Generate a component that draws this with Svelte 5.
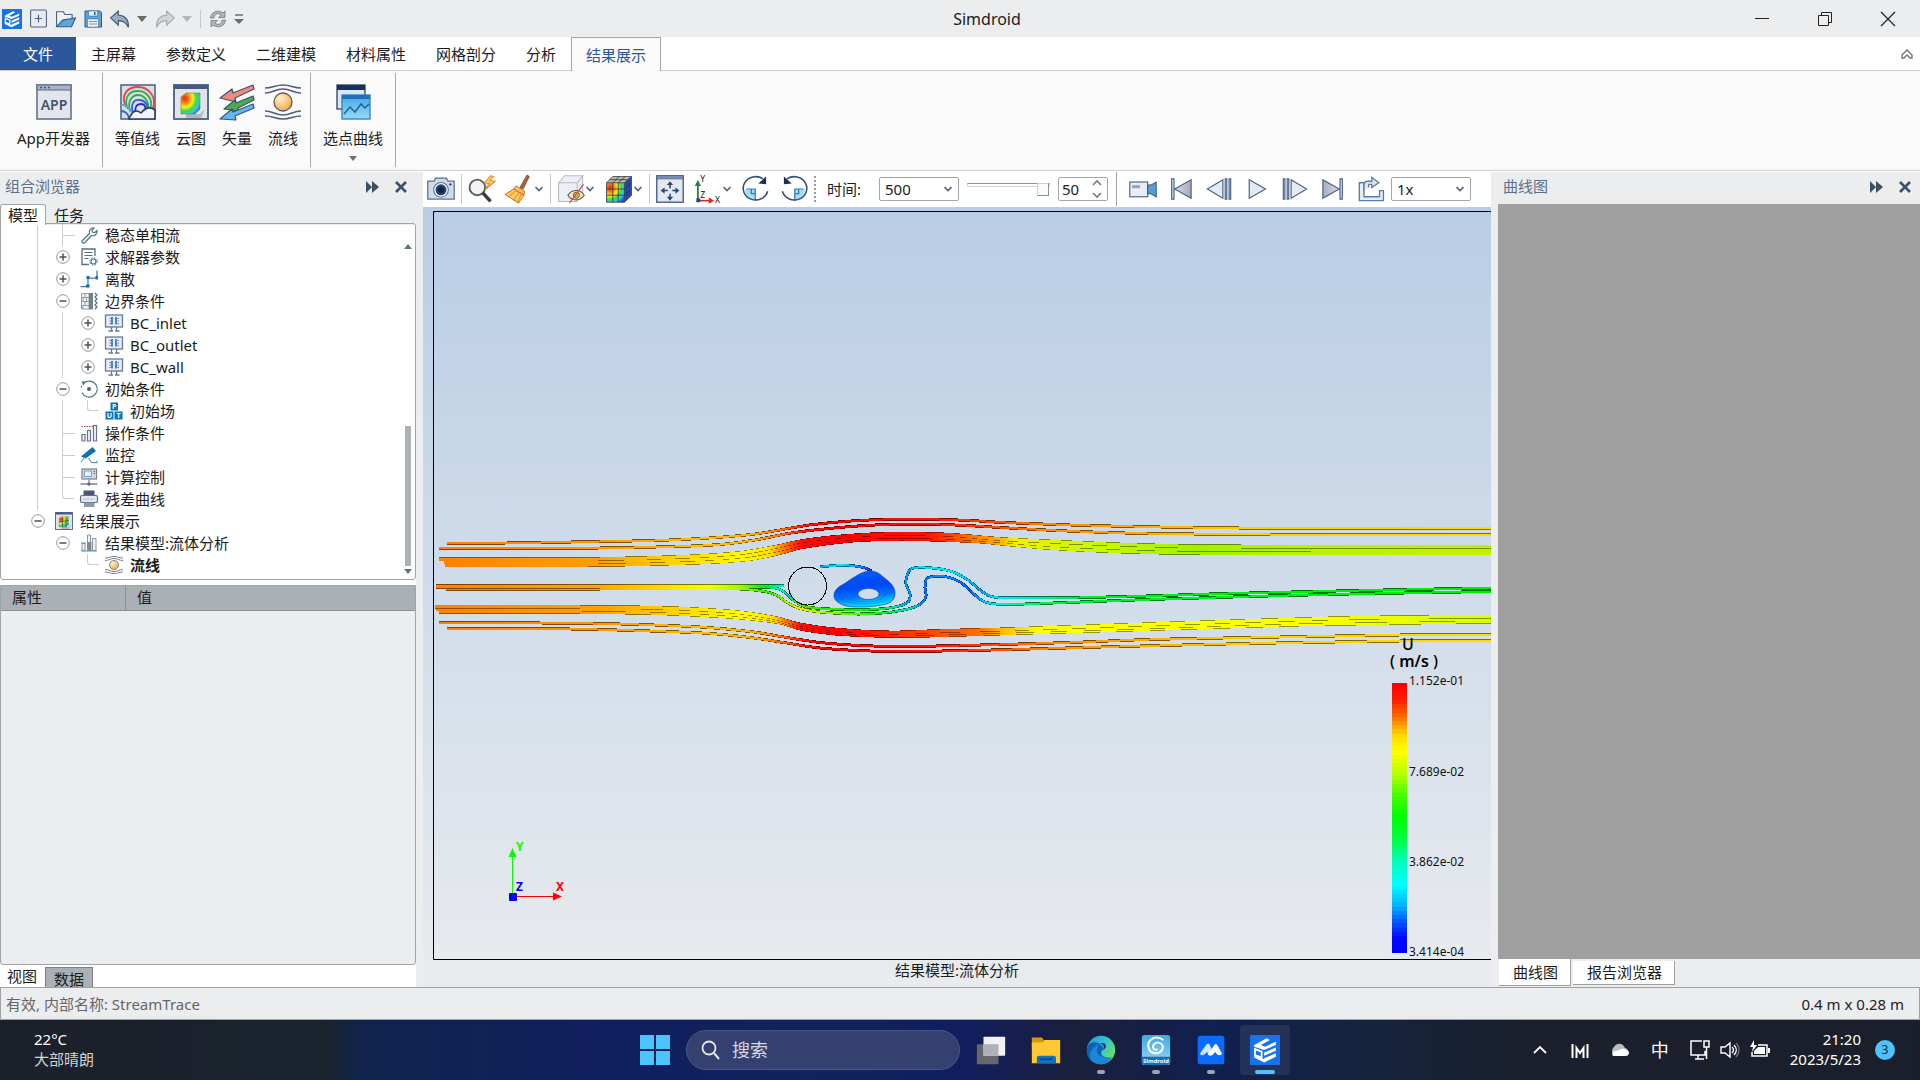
<script>
  const ribbonTabs = ['主屏幕', '参数定义', '二维建模', '材料属性', '网格剖分', '分析', '结果展示'];
  let activeTab = $state('结果展示');

  const ribbonGroups = [
    [{ label: 'App开发器', icon: 'app' }],
    [
      { label: '等值线', icon: 'contour' },
      { label: '云图', icon: 'cloudmap' },
      { label: '矢量', icon: 'vector' },
      { label: '流线', icon: 'stream' }
    ],
    [{ label: '选点曲线', icon: 'curve', menu: true }]
  ];

  // cells: v = guide line, t = branch, l = last branch, + / - = expander, space = blank
  const tree = [
    { cells: ' vt', icon: 'wrench', label: '稳态单相流' },
    { cells: ' v+', icon: 'params', label: '求解器参数' },
    { cells: ' v+', icon: 'discrete', label: '离散' },
    { cells: ' v-', icon: 'wall', label: '边界条件' },
    { cells: ' vv+', icon: 'bc', label: 'BC_inlet' },
    { cells: ' vv+', icon: 'bc', label: 'BC_outlet' },
    { cells: ' vv+', icon: 'bc', label: 'BC_wall' },
    { cells: ' v-', icon: 'initial', label: '初始条件' },
    { cells: ' vvl', icon: 'field', label: '初始场' },
    { cells: ' vt', icon: 'operate', label: '操作条件' },
    { cells: ' vt', icon: 'monitor', label: '监控' },
    { cells: ' vt', icon: 'control', label: '计算控制' },
    { cells: ' vl', icon: 'residual', label: '残差曲线' },
    { cells: ' -', icon: 'result', label: '结果展示' },
    { cells: '  -', icon: 'model', label: '结果模型:流体分析' },
    { cells: '   l', icon: 'stream', label: '流线', bold: true }
  ];

  const viewTools = [
    { icon: 'camera', label: '截图', sep: 'line' },
    { icon: 'zoom', label: '缩放' },
    { icon: 'broom', label: '清除', menu: true, sep: 'line' },
    { icon: 'hidebox', label: '隐藏', menu: true },
    { icon: 'cube', label: '显示模式', menu: true, sep: 'line' },
    { icon: 'fit', label: '适应窗口' },
    { icon: 'axes', label: '视角', menu: true },
    { icon: 'rotcw', label: '顺时针旋转' },
    { icon: 'rotccw', label: '逆时针旋转', sep: 'dots' }
  ];

  const playerTools = [
    { icon: 'video', label: '录制' },
    { icon: 'first', label: '第一帧' },
    { icon: 'prev', label: '上一帧' },
    { icon: 'play', label: '播放' },
    { icon: 'next', label: '下一帧' },
    { icon: 'last', label: '最后一帧' }
  ];

  const taskApps = [
    { icon: 'taskview', label: '任务视图' },
    { icon: 'folder', label: '文件资源管理器' },
    { icon: 'edge', label: 'Edge', running: true },
    { icon: 'simdroid', label: 'Simdroid', running: true },
    { icon: 'meeting', label: '会议', running: true },
    { icon: 'logo', label: 'Simdroid', current: true }
  ];

  let frame = $state(50);

  // stream tubes, in view coordinates
  const tubes = [
    { color: 'outer', pts: [[447,543],[507,543],[600,541.5],[655,540.5],[709,538],[755,534],[794,527.5],[813,524.5],[851,521],[889,519.3],[927,519.3],[966,520.3],[1000,522.3],[1070,525],[1160,527],[1270,528.3],[1491,528.5]] },
    { color: 'outer', pts: [[439,548.5],[600,548],[675,546.5],[720,544.5],[755,540],[794,532.5],[851,526.5],[889,524.5],[927,524.2],[966,525.5],[1000,527.5],[1067,531],[1147,533.5],[1270,534.5],[1491,534.5]] },
    { color: 'upper', thick: true, pts: [[445,565],[590,565],[700,562.5],[750,559],[780,553],[800,547.5],[830,543],[860,540],[900,539],[940,539.8],[980,541.5],[1000,543.5],[1050,548],[1120,551.5],[1200,553],[1491,553]] },
    { color: 'upper', thick: true, pts: [[444,562.3],[600,562],[695,559.5],[745,556],[778,550],[800,544.5],[830,540.5],[865,537.5],[900,536.5],[945,537.5],[1000,541],[1050,545],[1120,548],[1200,549.8],[1491,550]] },
    { color: 'upper', thick: true, pts: [[439,559.5],[600,559],[690,556.5],[740,553],[775,547],[800,541.5],[830,537.5],[870,534.5],[905,533.8],[950,534.8],[1000,539],[1050,541.5],[1120,544.5],[1200,546.3],[1491,546.8]] },
    { color: 'lower', thick: true, pts: [[439,611.5],[580,612],[650,613],[700,615],[745,618],[780,622.5],[800,628.5],[830,633],[860,635],[900,636],[950,635],[1000,633.5],[1150,629],[1300,624.5],[1491,621.5]] },
    { color: 'lower', thick: true, pts: [[436,609],[580,609.5],[650,610.5],[700,612.5],[743,615.5],[778,620.5],[800,626.5],[830,631],[865,633.5],[900,634.3],[950,633],[1000,631.5],[1150,627],[1300,622],[1491,619]] },
    { color: 'lower', thick: true, pts: [[435,606.5],[580,607],[640,607.5],[690,609],[740,612.5],[775,618],[800,624.5],[830,629],[870,632],[900,632.5],[940,631],[1000,629.5],[1200,622.5],[1350,618],[1491,616.5]] },
    { color: 'outer', pts: [[439,622.5],[540,623],[620,624],[700,627],[750,631.5],[790,638],[820,642.5],[860,645.5],[900,646.5],[960,645.5],[1000,644.5],[1070,642.5],[1150,639.5],[1280,637],[1400,635],[1491,634.5]] },
    { color: 'outer', pts: [[447,628.5],[570,629],[650,631],[710,633.5],[750,637.5],[790,643.5],[820,648],[870,651],[920,651.3],[1000,649.8],[1120,646.5],[1250,643.5],[1400,641],[1491,640.5]] },
    { color: 'wakeOut', pts: [[446,589],[600,589],[740,589],[765,591.5],[777,595.5],[788,603],[800,608.5],[820,612],[855,614],[885,612.8],[910,608.5],[922,603],[926,596],[925,588],[926,580],[930,577],[945,576.5],[960,582],[975,595],[985,602],[1000,604.3],[1025,604],[1080,602],[1150,599.5],[1250,596.5],[1350,594],[1491,591.5]] },
    { color: 'wakeIn', pts: [[436,587],[600,587],[750,587],[775,588],[783,591],[793,600],[805,606.5],[830,609],[870,609.5],[895,607],[908,602],[910,594],[906,584],[907,576],[911,569],[925,567.5],[950,571],[968,580],[980,590],[990,596],[1000,597.7],[1080,597.5],[1154,595.8],[1209,594],[1300,591.8],[1407,589.5],[1491,588]] },
    { color: 'wakeIn', pts: [[436,585.5],[600,585.5],[740,585.5],[784,585.5]] },
    { color: 'spiral', pts: [[820,566.7],[841,565.3],[855,566],[865,568],[872,571]] }
  ];

  const colors = {
    outer: [[435,'#ff8000'],[600,'#ff9800'],[700,'#ffc000'],[750,'#ffb400'],[780,'#ff7000'],[805,'#ff1000'],[830,'#ff0000'],[930,'#ff1000'],[1000,'#ff5000'],[1050,'#ff8c00'],[1130,'#ffa800'],[1250,'#ffd000'],[1491,'#ffdc00']],
    upper: [[435,'#ff8000'],[600,'#ffa000'],[680,'#ffd800'],[740,'#fff800'],[770,'#ffe000'],[785,'#ff7000'],[800,'#ff1000'],[830,'#ff0000'],[930,'#ff1400'],[970,'#ff7000'],[1000,'#ffb000'],[1015,'#f0f000'],[1100,'#c8f800'],[1200,'#a0f000'],[1300,'#b8f400'],[1491,'#c4f000']],
    lower: [[435,'#ff8000'],[600,'#ffa000'],[680,'#ffd800'],[740,'#ffff00'],[772,'#ffe000'],[785,'#ff8000'],[800,'#ff1000'],[830,'#ff0000'],[900,'#ff3000'],[980,'#ff7000'],[1005,'#ffc000'],[1040,'#ffff00'],[1300,'#fbff00'],[1491,'#d8ff00']],
    wakeIn: [[435,'#ff8000'],[600,'#ffa800'],[670,'#ffe000'],[710,'#f0ff00'],[740,'#a0f800'],[765,'#00e820'],[782,'#00f0d0'],[790,'#00d8a0'],[800,'#50e800'],[830,'#20f000'],[875,'#00f020'],[895,'#00e0b0'],[908,'#0090ff'],[920,'#00e0ff'],[950,'#00f0f0'],[980,'#00a0ff'],[1000,'#00e8ff'],[1040,'#00e8a0'],[1100,'#00f020'],[1491,'#00f000']],
    wakeOut: [[435,'#ff8000'],[600,'#ffa800'],[670,'#ffe000'],[710,'#f0ff00'],[740,'#a0f800'],[770,'#20f000'],[785,'#a0f000'],[800,'#f0f000'],[830,'#90f800'],[885,'#00f020'],[910,'#00e0c0'],[924,'#0070ff'],[940,'#0090ff'],[970,'#0060ff'],[985,'#00d0ff'],[1000,'#00f0d0'],[1050,'#00f040'],[1491,'#00f000']],
    spiral: [[820,'#00a0ff'],[840,'#00f0ff'],[855,'#00a0ff'],[872,'#0030ff']]
  };

  function smooth(pts) {
    let d = `M${pts[0][0]} ${pts[0][1]}`;
    for (let i = 0; i < pts.length - 1; i++) {
      const a = pts[i - 1] ?? pts[i];
      const b = pts[i];
      const c = pts[i + 1];
      const e = pts[i + 2] ?? c;
      // handle length follows the span, so long flat parts do not overshoot short ones
      const span = Math.hypot(c[0] - b[0], c[1] - b[1]) / 3;
      const lb = Math.hypot(c[0] - a[0], c[1] - a[1]) || 1;
      const lc = Math.hypot(e[0] - b[0], e[1] - b[1]) || 1;
      const x1 = b[0] + ((c[0] - a[0]) / lb) * span;
      const y1 = b[1] + ((c[1] - a[1]) / lb) * span;
      const x2 = c[0] - ((e[0] - b[0]) / lc) * span;
      const y2 = c[1] - ((e[1] - b[1]) / lc) * span;
      d += `C${x1} ${y1} ${x2} ${y2} ${c[0]} ${c[1]}`;
    }
    return d;
  }

  const legendStops = [
    [0, 255, 0, 0], [0.06, 255, 30, 0], [0.12, 255, 110, 0], [0.19, 255, 220, 0], [0.25, 255, 255, 0],
    [0.34, 180, 255, 0], [0.42, 60, 255, 0], [0.5, 0, 255, 0], [0.6, 0, 255, 90], [0.66, 0, 255, 180],
    [0.75, 0, 255, 255], [0.82, 0, 190, 255], [0.88, 0, 100, 255], [0.95, 0, 10, 255], [1, 0, 0, 255]
  ];
  const bands = Array.from({ length: 64 }, (_, i) => {
    const t = i / 63;
    const k = Math.max(1, legendStops.findIndex((s) => s[0] >= t));
    const a = legendStops[k - 1];
    const b = legendStops[k];
    const f = (t - a[0]) / (b[0] - a[0]);
    const ch = (n) => Math.round(a[n] + (b[n] - a[n]) * f);
    return `rgb(${ch(1)},${ch(2)},${ch(3)})`;
  });
  const legendLabels = [['1.152e-01', 685], ['7.689e-02', 776], ['3.862e-02', 866], ['3.414e-04', 956]];
</script>

{#snippet chevron()}
  <svg class="chev" viewBox="0 0 10 8"><path d="M1.5 2L5 5.600 8.500 2" fill="none" stroke="#4f6478" stroke-width="1.6" /></svg>
{/snippet}

{#snippet icon(name, size)}
  <svg width={size} height={size} viewBox="0 0 36 36" aria-hidden="true">
    {#if name === 'app'}
      <rect x="1" y="1" width="34" height="34" fill="#e3e5ea" stroke="#5a6a88" stroke-width="1.5" />
      <rect x="1" y="1" width="34" height="5" fill="#a9b3c4" stroke="#5a6a88" />
      <path d="M4 3.500h2M8 3.500h2M12 3.500h2" stroke="#4a5878" stroke-width="1.5" />
      <text x="18" y="26" text-anchor="middle" font-size="14" font-weight="600" fill="#44546f">APP</text>
    {:else if name === 'contour'}
      <rect x="1" y="1" width="34" height="34" fill="#d9dde6" stroke="#4a5c80" stroke-width="1.5" />
      <g fill="none" stroke-width="1.8">
        <path d="M6 23C0 10 8 3 18 3s19 9 15 21" stroke="#e04848" />
        <path d="M8 25C3 14 9 7 18 7s16 9 12 18" stroke="#2fae4e" />
        <path d="M10 27C7 17 12 11 18 11s12 7 10 15" stroke="#2fae4e" />
        <path d="M13 29C10 20 14 15 20 16s9 6 6 11" stroke="#3a5be0" />
        <path d="M16 30c-2-7 1-10 5-10s6 4 3 8" stroke="#2036c0" />
        <path d="M1 21c5-1 9 3 10 7" stroke="#4aa3df" />
        <path d="M1 27c4 0 8 3 8 8" stroke="#2b65c8" />
      </g>
      <path d="M9 35c3-8 7-10 12-6 5-6 10-6 14-3v9z" fill="#f3f4f7" stroke="#2c3c62" stroke-width="1.6" />
    {:else if name === 'cloudmap' || name === 'result'}
      <rect x="1" y="1" width="34" height="34" fill="#dfe3ea" stroke="#5a6c90" stroke-width="2" />
      <rect x="1" y="1" width="34" height="4" fill="#46597f" />
      <path d="M13 30h14l5-5-4 9H13z" fill="#8d97a8" opacity=".6" />
      <path d="M8 13l5-4h14v16l-5 5H8z" fill="url(#g-rainbow)" stroke="#6e8a2c" stroke-width=".6" />
      {#if name === 'result'}<path d="M8 20l19-3M15 12v18M22 11v19" stroke="#22402a" stroke-width="1.3" />{/if}
    {:else if name === 'vector'}
      <g stroke="#3f5374" stroke-width="1.2" stroke-linejoin="round">
        <path d="M1 14L13 5l1 4 20-8 1 4-19 9 1 4z" fill="#ef8a7c" />
        <path d="M5 25l11-9 1 3 17-7 1 4-16 8 1 3z" fill="#43ae52" />
        <path d="M1 35l12-10 1 3 20-8 1 4-19 8 1 4z" fill="#64b5f3" />
      </g>
    {:else if name === 'stream'}
      <g fill="none" stroke="#50607f" stroke-width="1.6">
        <path d="M0 4c8 0 10-3 18-3s10 3 18 3M0 9c8 0 10-4 18-4s10 4 18 4" />
        <path d="M0 32c8 0 10 3 18 3s10-3 18-3M0 27c8 0 10 4 18 4s10-4 18-4" />
      </g>
      <circle cx="18" cy="18" r="9" fill="url(#g-ball)" stroke="#5c5a60" stroke-width="1.3" />
    {:else if name === 'curve'}
      <rect x="2" y="1" width="28" height="24" fill="#dbe7f2" stroke="#2b3f66" stroke-width="1.3" />
      <rect x="2" y="1" width="28" height="5" fill="#16305e" />
      <rect x="7" y="11" width="28" height="24" fill="url(#g-sky)" stroke="#2b7fc0" stroke-width="1.3" />
      <rect x="7" y="11" width="28" height="4" fill="#2170b8" />
      <path d="M9 30l6-7 5 5 6-8 4 4 4-4" fill="none" stroke="#2a6090" stroke-width="1.5" />
    {:else if name === 'wrench'}
      <path d="M4 30L19 15c-2-6 3-12 9-11l-4 5 2 4 4 0 4-4c1 7-5 12-11 10L9 34c-3 1-6-1-5-4z" fill="#f2f6f7" stroke="#4d7480" stroke-width="2.4" />
    {:else if name === 'params'}
      <path d="M30 16V2H4v31h14" fill="#fff" stroke="#56707e" stroke-width="2.6" />
      <path d="M9 9h16M9 15h16M9 21h8" stroke="#56707e" stroke-width="2.4" />
      <circle cx="27" cy="27" r="5" fill="#fff" stroke="#2b7cc0" stroke-width="2.4" />
      <circle cx="27" cy="27" r="7.5" fill="none" stroke="#2b7cc0" stroke-width="2" stroke-dasharray="3 2.9" />
    {:else if name === 'discrete'}
      <path d="M1 33h15V16h18V1" fill="none" stroke="#50788c" stroke-width="2.5" />
      <path d="M12 29h7v6h-7zM13 12h6v6h-6zM31 12h5v7h-5z" fill="#0a72bd" />
    {:else if name === 'wall'}
      <path d="M3 3h15v31H3zM3 11h15M3 19h15M3 27h15M10 3v8M6 11v8M13 11v8M10 19v8M6 27v7" fill="#f2f4f5" stroke="#87949c" stroke-width="1.8" />
      <rect x="18" y="2" width="8" height="33" fill="#72828d" />
      <path d="M30 2l4 4-4 4 4 4-4 4 4 4-4 4 4 4-4 4" fill="none" stroke="#56707e" stroke-width="2.4" />
    {:else if name === 'bc'}
      <rect x="1" y="2" width="34" height="24" fill="#e6ebf4" stroke="#6a7898" stroke-width="2.6" />
      <path d="M14 6v15M22 6v15" stroke="#4a86c4" stroke-width="4" />
      <path d="M9 9h3M9 14h3M9 19h3M25 9h3M25 14h3M25 19h3" stroke="#4a86c4" stroke-width="2.4" />
      <path d="M13 26v7M23 26v7M7 34h9M20 34h9" stroke="#6a7898" stroke-width="2.6" />
    {:else if name === 'initial'}
      <path d="M8 6a16 16 0 1 1-4 19" fill="none" stroke="#4d7480" stroke-width="2.3" />
      <path d="M8 6a16 16 0 0 0-6 11" fill="none" stroke="#4d7480" stroke-width="2.3" stroke-dasharray="4 3" />
      <path d="M3 3h8l-4 8z" fill="#4d7480" />
      <circle cx="18" cy="18" r="4" fill="#50606a" />
    {:else if name === 'field'}
      <path d="M11 1h15v16H11zM1 19h16v16H1zM19 19h16v16H19z" fill="#0b73bd" />
      <g font-size="14" font-weight="700" fill="#fff" text-anchor="middle">
        <text x="18.5" y="14">P</text><text x="9" y="32">U</text><text x="27" y="32">T</text>
      </g>
    {:else if name === 'operate'}
      <path d="M3 5h24" stroke="#b04a4a" stroke-width="2" stroke-dasharray="3 2" />
      <path d="M4 21h6v13H4zM15 13h6v21h-6zM27 3h6v31h-6z" fill="#f4f5f8" stroke="#66728c" stroke-width="2.4" />
    {:else if name === 'monitor'}
      <path d="M2 21L25 2l7 8L11 25z" fill="#0b6fb8" />
      <path d="M2 32l8-10M17 24l6 9h11M34 29v6" fill="none" stroke="#5f93b8" stroke-width="2.2" />
    {:else if name === 'control'}
      <rect x="4" y="2" width="29" height="20" fill="#d5d9e1" stroke="#76829a" stroke-width="2.4" />
      <rect x="9" y="6" width="14" height="11" fill="#eaf4fc" stroke="#6490c0" stroke-width="1.6" />
      <path d="M27 7h3M27 11h3" stroke="#5a6680" stroke-width="2" />
      <path d="M18 23v6M1 32h34" stroke="#76829a" stroke-width="2.6" />
      <circle cx="18" cy="32" r="3.5" fill="#5a6a84" />
    {:else if name === 'residual'}
      <rect x="7" y="1" width="22" height="10" fill="#4c5876" />
      <rect x="1" y="11" width="34" height="14" rx="3" fill="#e4e7ee" stroke="#5f6c8a" stroke-width="2.4" />
      <path d="M7 18h22" stroke="#9aa4ba" stroke-width="2" stroke-dasharray="4 3" />
      <path d="M8 25h21v9H8z" fill="#8d97ae" />
    {:else if name === 'model'}
      <path d="M4 19h6v14H4zM15 2h6v31h-6zM25 9h7v24h-7z" fill="#eef1f4" stroke="#8b98a4" stroke-width="2" />
      <rect x="14" y="16" width="9" height="18" fill="#7d8b98" />
      <path d="M2 34h32M2 18h10" stroke="#5a8ab0" stroke-width="2" />
    {:else if name === 'camera'}
      <path d="M1 8h8l2-4h14l2 4h8v23H1z" fill="#cfdbea" stroke="#5a7194" stroke-width="1.6" />
      <circle cx="18" cy="19" r="9.5" fill="#f2f6fa" stroke="#5a7194" stroke-width="1.3" />
      <circle cx="18" cy="19" r="7" fill="#27416e" />
      <circle cx="18" cy="19" r="4" fill="#12264c" />
      <circle cx="30" cy="12" r="1.5" fill="#27416e" />
    {:else if name === 'zoom'}
      <circle cx="12" cy="16" r="10" fill="#f1f4f7" stroke="#5c5c5e" stroke-width="2.4" />
      <path d="M19 23l10 11" stroke="#3b3b3c" stroke-width="4.5" />
      <path d="M29 1l-8 9 6 1-5 8 13-11-7-1 5-5z" fill="#ffcf6a" stroke="#e5822a" stroke-width="1.3" />
    {:else if name === 'broom'}
      <path d="M27 0l3 2-8 16-4-2z" fill="#a8643c" stroke="#7a4526" />
      <path d="M13 14l11 7-1 5-13-8z" fill="#ffbe5c" stroke="#b86a20" stroke-width="1.2" />
      <path d="M10 18L-1 25l17 11 7-10z" fill="#ffc861" stroke="#cf7e1e" stroke-width="1.3" />
      <path d="M13 20L4 28M17 22l-7 10M20 24l-5 11" stroke="#cf7e1e" />
    {:else if name === 'hidebox'}
      <path d="M2 10l8-9h23l-7 9zM2 10h24v24H2zM26 10l7-9v22l-7 10z" fill="#eceff4" stroke="#b4bac6" stroke-width="1.3" />
      <path d="M14 26c5-8 16-8 21 0-5 8-16 8-21 0z" fill="#ffe6b0" stroke="#4c5a72" stroke-width="1.4" />
      <circle cx="25" cy="26" r="4" fill="#d8a850" stroke="#4c5a72" />
      <path d="M16 36L34 12" stroke="#c8503c" stroke-width="1.6" />
    {:else if name === 'cube'}
      <path d="M2 10h23v25H2z" fill="url(#g-rainbow)" />
      <path d="M2 10l8-8h24l-9 8z" fill="#c9b79a" />
      <path d="M25 10l9-8v24l-9 9z" fill="#2b52b8" />
      <path d="M2 10h23v25H2zM2 18h23l9-8M2 26h23l9-8M10 10v25M17 10v25M25 35l9-9V2H10l-8 8M10 10l8-8M17 10l9-8M25 10l9-8M28 7v25M31 4v25M6 6h23" fill="none" stroke="#26324c" />
    {:else if name === 'fit'}
      <rect x="1" y="1" width="34" height="34" fill="#e4e9f1" stroke="#4a5e86" stroke-width="1.8" />
      <rect x="1" y="1" width="34" height="4" fill="#7f93b8" stroke="#4a5e86" />
      <path d="M18 8l4 5h-8zM18 33l4-5h-8zM6 20l5-4v8zM30 20l-5-4v8z" fill="#2a4574" />
      <path d="M18 12v5M18 24v5M10 20h5M21 20h5" stroke="#2a4574" stroke-width="2" />
    {:else if name === 'axes'}
      <path d="M5 33V12" stroke="#1d8a3c" stroke-width="2.4" /><path d="M5 6l4 8H1z" fill="#1d8a3c" />
      <path d="M5 33h16" stroke="#d82a20" stroke-width="2" /><path d="M26 33l-7-4v8z" fill="#d82a20" />
      <rect x="3" y="30" width="5" height="5" fill="#24419a" />
      <g font-size="11" fill="#111"><text x="8" y="9">Y</text><text x="8" y="29">Z</text><text x="27" y="36">X</text></g>
    {:else if name === 'rotcw'}
      <path d="M17 18H4c0 8 6 14 13 14z" fill="#a6dcf6" /><path d="M6 18h11v15M12 18v6h5" fill="none" stroke="#2a7ec0" stroke-width="1.6" />
      <path d="M33 21a16 15 0 1 1-6-16" fill="none" stroke="#33507c" stroke-width="2" />
      <path d="M31 2v10l-10-1z" fill="#16305c" />
    {:else if name === 'rotccw'}
      <path d="M19 18h13c0 8-6 14-13 14z" fill="#a6dcf6" /><path d="M30 18H19v15M24 18v6h-5" fill="none" stroke="#2a7ec0" stroke-width="1.6" />
      <path d="M3 21a16 15 0 1 0 6-16" fill="none" stroke="#33507c" stroke-width="2" />
      <path d="M5 2v10l10-1z" fill="#16305c" />
    {:else if name === 'video'}
      <rect x="1" y="9" width="23" height="19" fill="#e9ecf2" stroke="#5a6c90" stroke-width="1.6" />
      <path d="M4 13h10v4H4z" fill="#9aa4b6" />
      <path d="M24 13h4l7-4v19l-7-4h-4z" fill="#54a0d4" stroke="#35577e" stroke-width="1.3" />
    {:else if name === 'first' || name === 'last'}
      <g transform={name === 'last' ? 'matrix(-1 0 0 1 36 0)' : null}>
        <path d="M6 5h3v26H6zM31 6v24L10 18z" fill="url(#g-steel)" stroke="#4a6088" stroke-width="1.5" />
      </g>
    {:else if name === 'prev' || name === 'next'}
      <g transform={name === 'next' ? 'matrix(-1 0 0 1 36 0)' : null}>
        <path d="M23 6v24L3 18zM26 5h2v26h-2zM31 5h2v26h-2z" fill="#e6eaf2" stroke="#4a6088" stroke-width="1.5" />
      </g>
    {:else if name === 'play'}
      <path d="M8 6v24l21-12z" fill="#e3e8f1" stroke="#4a6088" stroke-width="1.5" />
    {:else if name === 'export'}
      <path d="M3 10h6v18h20v-8h5v13H3z" fill="#e6edf5" stroke="#5d7ba4" stroke-width="1.7" />
      <path d="M9 21v-8c0-3 2-5 5-5h5V3l9 7-9 6v-4h-4v4" fill="#dbe6f2" stroke="#5d7ba4" stroke-width="1.7" />
    {:else if name === 'new'}
      <rect x="3" y="2" width="30" height="32" rx="2" fill="#e8ebf1" stroke="#4d628a" stroke-width="2" />
      <path d="M18 11v14M11 18h14" stroke="#4d628a" stroke-width="2.2" />
    {:else if name === 'open'}
      <path d="M1 32V5h12l3 5h13v7" fill="#f0f2f6" stroke="#4d628a" stroke-width="2" />
      <path d="M1 32l11-12 23-4-7 16z" fill="#5fa5d8" stroke="#2b5f96" stroke-width="2" />
    {:else if name === 'save'}
      <path d="M2 2h30l3 3v29H2z" fill="#5fa3d6" stroke="#2b5a8c" stroke-width="2" />
      <path d="M9 2h18v10H9z" fill="#e9f0f7" stroke="#2b5a8c" /><path d="M20 4h3v6h-3z" fill="#2b5a8c" />
      <path d="M7 18h22v16H7z" fill="#f4f7fa" stroke="#2b5a8c" /><path d="M10 23h16M10 28h16" stroke="#7d8da2" stroke-width="2" />
    {:else if name === 'undo' || name === 'redo'}
      <g transform={name === 'redo' ? 'matrix(-1 0 0 1 36 0)' : null}>
        <path d="M1 16L15 4v7c14 1 19 10 18 22-4-9-9-12-18-12v8z" fill={name === 'redo' ? '#d2d4d8' : '#9aabc4'} stroke={name === 'redo' ? '#a4a8ae' : '#3f5478'} stroke-width="2" />
      </g>
    {:else if name === 'refresh'}
      <path d="M3 16C4 2 20-1 28 6l4-4v13H19l5-5c-6-5-13-3-14 6zM33 20c-1 14-17 17-25 10l-4 4V21h13l-5 5c6 5 13 3 14-6z" fill="#b0b2b5" stroke="#737578" stroke-width="1.5" />
    {:else if name === 'logo'}
      <rect width="36" height="36" rx="1" fill="#1673ec" />
      <path d="M5 12L20 4l4 2-11 6 5 2 13-6v4l-14 6-12-4zM17 21l14-6v4l-14 6zM17 28l14-6v4l-14 7-12-6v-3l12 5z" fill="#fff" />
      <path d="M6 17l8 3v7l-8-3z" fill="none" stroke="#fff" stroke-width="2.2" />
    {:else if name === 'taskview'}
      <rect x="1" y="11" width="26" height="24" rx="1" fill="#66676c" />
      <rect x="9" y="2" width="26" height="23" rx="1" fill="#f2f2f4" />
      <path d="M9 11h18v14H9z" fill="#b0b1b6" />
    {:else if name === 'folder'}
      <path d="M1 3h12l3 4h-2v8H1z" fill="#d9960f" />
      <path d="M1 9h12l3-3h19v28H1z" fill="#ffc933" />
      <path d="M7 34v-6c0-2 1-3 3-3h17c2 0 3 1 3 3v6z" fill="#1273bd" /><path d="M11 29h15" stroke="#0b4a86" stroke-width="2" />
    {:else if name === 'edge'}
      <circle cx="18" cy="18" r="17" fill="url(#g-edge)" />
      <path d="M1 18C2 8 12 7 17 11c5 3 4 7 2 8-3 4 2 10 12 8-6 9-16 10-23 5C3 29 1 24 1 18z" fill="#0c62b4" />
      <path d="M8 32c-7-7-1-18 8-21-6 7-3 18 15 16-6 9-16 10-23 5z" fill="#1b86d8" />
      <path d="M20 18c3-3 1-7-3-8 8-2 9 6 3 8z" fill="#0f2a5c" />
    {:else if name === 'simdroid'}
      <rect x="1" y="0" width="34" height="36" rx="3" fill="url(#g-sky)" />
      <path d="M1 26h34v7c0 2-1 3-3 3H4c-2 0-3-1-3-3z" fill="#1a6db8" />
      <path d="M27 6C17-1 7 6 9 15c2 9 15 9 17 1 1-7-8-9-11-4-2 4 2 7 5 5" fill="none" stroke="#fff" stroke-width="2.4" />
      <text x="18" y="34" font-size="7" font-weight="700" fill="#fff" text-anchor="middle">Simdroid</text>
    {:else if name === 'meeting'}
      <rect x="2" y="1" width="32" height="34" rx="3" fill="#0a6bff" />
      <path d="M5 22l7-10c2-2 4-2 5 1l4 9c-1 3-5 3-7 0l-1-2c-2 4-8 6-8 2z" fill="#cfe2ff" />
      <path d="M14 23l8-11c2-2 3-1 4 1l5 9c0 3-5 3-7 0l-1-2c-3 5-7 6-9 3z" fill="#fff" />
    {/if}
  </svg>
{/snippet}

{#snippet dockButtons()}
  <button class="dock-btn" aria-label="折叠">
    <svg width="14" height="12" viewBox="0 0 14 12"><path d="M1 0l6 6-6 6zM7 0l7 6-7 6z" fill="#3c5068" /></svg>
  </button>
  <button class="dock-btn" aria-label="关闭">
    <svg width="12" height="12" viewBox="0 0 12 12"><path d="M1 1l10 10M11 1L1 11" stroke="#3c5068" stroke-width="2.6" /></svg>
  </button>
{/snippet}

<svg class="defs" width="0" height="0" aria-hidden="true">
  <defs>
    <radialGradient id="g-rainbow" cx="0.2" cy="0.25" r="0.95">
      <stop offset="0" stop-color="#f02010" /><stop offset="0.25" stop-color="#ff8a10" /><stop offset="0.45" stop-color="#f8f020" />
      <stop offset="0.65" stop-color="#40d840" /><stop offset="0.82" stop-color="#30c8f0" /><stop offset="1" stop-color="#2050d8" />
    </radialGradient>
    <radialGradient id="g-ball" cx="0.35" cy="0.3" r="0.8"><stop offset="0" stop-color="#fff0cc" /><stop offset="1" stop-color="#f2a640" /></radialGradient>
    <linearGradient id="g-sky" x1="0" y1="0" x2="0" y2="1"><stop offset="0" stop-color="#3fa8e4" /><stop offset="1" stop-color="#9ad8f6" /></linearGradient>
    <linearGradient id="g-steel" x1="0" y1="0" x2="1" y2="0"><stop offset="0" stop-color="#dfe4ea" /><stop offset="1" stop-color="#a4adba" /></linearGradient>
    <linearGradient id="g-edge" x1="0" y1="0" x2="1" y2="0.6"><stop offset="0" stop-color="#1c8fd8" /><stop offset="0.55" stop-color="#35c1d8" /><stop offset="1" stop-color="#66e35a" /></linearGradient>
  </defs>
</svg>

<div class="screen">
  <header class="titlebar">
    <div class="quick">
      <button aria-label="Simdroid">{@render icon('logo', 20)}</button>
      <button aria-label="新建">{@render icon('new', 19)}</button>
      <button aria-label="打开">{@render icon('open', 20)}</button>
      <button aria-label="保存">{@render icon('save', 18)}</button>
      <button aria-label="撤销">{@render icon('undo', 20)}</button>
      <button class="caret" aria-label="撤销列表"><svg width="10" height="6" viewBox="0 0 10 6"><path d="M0 0h10L5 6z" fill="#6b6b6d" /></svg></button>
      <button aria-label="重做">{@render icon('redo', 20)}</button>
      <button class="caret" aria-label="重做列表"><svg width="10" height="6" viewBox="0 0 10 6"><path d="M0 0h10L5 6z" fill="#b6b8ba" /></svg></button>
      <span class="quick-sep"></span>
      <button class="refresh" aria-label="刷新">{@render icon('refresh', 18)}</button>
      <button class="caret" aria-label="自定义"><svg width="10" height="10" viewBox="0 0 10 10"><path d="M1 1h8" stroke="#6b6b6d" stroke-width="1.5" /><path d="M0 5h10l-5 5z" fill="#6b6b6d" /></svg></button>
    </div>
    <h1>Simdroid</h1>
    <div class="window-buttons">
      <button aria-label="最小化"><svg width="14" height="14" viewBox="0 0 14 14"><path d="M0 6.500h14" stroke="#222" /></svg></button>
      <button aria-label="还原"><svg width="14" height="14" viewBox="0 0 14 14"><path d="M.5 3.500h10v10H.5zM3.500 3.500v-3h10v10h-3" fill="none" stroke="#222" /></svg></button>
      <button aria-label="关闭"><svg width="14" height="14" viewBox="0 0 14 14"><path d="M0 0l14 14M14 0L0 14" stroke="#222" stroke-width="1.2" /></svg></button>
    </div>
  </header>

  <nav class="ribbon-tabs">
    <button class="file-tab">文件</button>
    {#each ribbonTabs as tab}
      <button class="ribbon-tab" class:active={activeTab === tab} onclick={() => (activeTab = tab)}>{tab}</button>
    {/each}
    <button class="collapse" aria-label="收起功能区">
      <svg width="12" height="10" viewBox="0 0 12 10"><path d="M1 6l5-5 5 5v3H9L6 6 3 9H1z" fill="none" stroke="#6a7078" stroke-width="1.3" /></svg>
    </button>
  </nav>

  <div class="ribbon">
    {#each ribbonGroups as group}
      <div class="ribbon-group">
        {#each group as item}
          <button class="ribbon-btn">
            <span class="ribbon-icon">{@render icon(item.icon, 36)}</span>
            <span class="ribbon-label">{item.label}</span>
            {#if item.menu}<svg width="8" height="5" viewBox="0 0 8 5"><path d="M0 0h8L4 5z" fill="#707070" /></svg>{/if}
          </button>
        {/each}
      </div>
    {/each}
  </div>

  <main class="workspace">
    <aside class="browser">
      <div class="dock-title"><h2>组合浏览器</h2>{@render dockButtons()}</div>
      <div class="browser-tabs">
        <button class="active">模型</button>
        <button>任务</button>
      </div>
      <div class="browser-body">
        <div class="tree-box">
          <ul class="tree">
            {#each tree as row}
              <li>
                {#each row.cells.split('') as cell}
                  {#if cell === '+' || cell === '-'}
                    <button class="expander" aria-label={cell === '+' ? '展开' : '折叠'}>
                      <svg width="14" height="14" viewBox="0 0 14 14">
                        <circle cx="7" cy="7" r="6.3" fill="#fff" stroke="#94989c" />
                        <path d={cell === '+' ? 'M3.500 7h7M7 3.500v7' : 'M3.500 7h7'} stroke="#4c5258" stroke-width="1.5" />
                      </svg>
                    </button>
                  {:else}
                    <span class="guide" class:line={cell === 'v' || cell === 't'} class:branch={cell === 't'} class:last={cell === 'l'}></span>
                  {/if}
                {/each}
                <span class="tree-icon">{@render icon(row.icon, 18)}</span>
                <span class:bold={row.bold}>{row.label}</span>
              </li>
            {/each}
          </ul>
          <div class="scrollbar">
            <svg width="8" height="5" viewBox="0 0 8 5"><path d="M0 5h8L4 0z" fill="#5f7676" /></svg>
            <span class="thumb"></span>
            <svg width="8" height="5" viewBox="0 0 8 5"><path d="M0 0h8L4 5z" fill="#5f7676" /></svg>
          </div>
        </div>
        <div class="props">
          <table>
            <thead><tr><th>属性</th><th>值</th></tr></thead>
          </table>
        </div>
        <div class="props-tabs">
          <button>视图</button>
          <button class="dark">数据</button>
        </div>
      </div>
    </aside>

    <section class="center">
      <div class="toolbar">
        {#each viewTools as tool}
          <div class="tool">
            <button aria-label={tool.label}>{@render icon(tool.icon, 28)}</button>
            {#if tool.menu}<button class="drop" aria-label={tool.label + '选项'}>{@render chevron()}</button>{/if}
          </div>
          {#if tool.sep}<span class={['sep', tool.sep]}></span>{/if}
        {/each}
        <label class="time-label" for="time">时间:</label>
        <div class="time-group">
          <div class="field time">
            <select id="time"><option>500</option></select>
            {@render chevron()}
          </div>
          <input class="slider" type="range" min="1" max="50" bind:value={frame} aria-label="帧" />
          <div class="field frame">
            <input type="number" min="1" max="50" bind:value={frame} aria-label="帧号" />
            <svg width="10" height="18" viewBox="0 0 10 18"><path d="M1 5l4-4 4 4M1 13l4 4 4-4" fill="none" stroke="#6b7f80" stroke-width="1.6" /></svg>
          </div>
        </div>
        <div class="player">
          {#each playerTools as tool}
            <button aria-label={tool.label}>{@render icon(tool.icon, 28)}</button>
          {/each}
          <div class="speed-group">
            <button aria-label="导出">{@render icon('export', 28)}</button>
            <div class="field speed">
              <select aria-label="播放速度"><option>1x</option></select>
              {@render chevron()}
            </div>
          </div>
        </div>
      </div>

      <div class="viewport">
        <svg class="scene" viewBox="423 207 1068 780" preserveAspectRatio="xMinYMin slice">
          <defs>
            {#each Object.entries(colors) as [name, stops]}
              {@const x0 = stops[0][0]}
              {@const x1 = stops[stops.length - 1][0]}
              <linearGradient id={'c-' + name} gradientUnits="userSpaceOnUse" x1={x0} x2={x1} y1="0" y2="0">
                {#each stops as [x, color]}
                  <stop offset={(x - x0) / (x1 - x0)} stop-color={color} />
                {/each}
              </linearGradient>
            {/each}
            <linearGradient id="c-vortex" x1="0" y1="0" x2="0.2" y2="1">
              <stop offset="0" stop-color="#0060ff" /><stop offset="0.5" stop-color="#0048f8" />
              <stop offset="0.78" stop-color="#0078ff" /><stop offset="1" stop-color="#00d8ff" />
            </linearGradient>
          </defs>
          <path d="M1500 211.500H433.500V959.500H1500" fill="none" stroke="#000" />
          <g fill="none" shape-rendering="crispEdges">
            {#each tubes as tube}
              {@const d = smooth(tube.pts)}
              {@const w = tube.thick ? 4 : 3}
              <path {d} stroke={`url(#c-${tube.color})`} stroke-width={w} />
              <path {d} stroke="#000" stroke-opacity={tube.thick ? 0.4 : 0.5} stroke-width={w} />
              <path {d} stroke={`url(#c-${tube.color})`} stroke-width={w - 1} />
            {/each}
            <circle cx="807.5" cy="586" r="19" stroke="#000" />
          </g>
          <path fill="url(#c-vortex)" fill-rule="evenodd" stroke="#0a3a9a" stroke-width=".6"
            d="M870 571c8 0 12 5 17 9s8 8 8 13-2 9-9 11-16 3-24 3-14 0-19-2-9-5-9-9 2-8 8-11 18-14 28-14zM879 593.500a10.500 5.500 0 1 0-21 1a10.500 5.500 0 0 0 21-1z" />
          <g fill="none" stroke="#003ac8" stroke-width=".7" opacity=".4">
            <path d="M868 575c10 0 22 9 22 18s-14 11-27 11-24-4-24-10 17-19 29-19z" />
            <path d="M868 581c10 0 17 5 17 12s-10 9-20 9-20-3-20-8 13-13 23-13z" />
          </g>

          <g class="legend">
            <text x="1408" y="650" text-anchor="middle" class="unit">U</text>
            <text x="1414" y="667" text-anchor="middle" class="unit">( <tspan font-weight="600">m/s</tspan> )</text>
            <g shape-rendering="crispEdges">
              {#each bands as band, i}
                <rect x="1392" y={683 + (i * 270) / 64} width="15" height="4.3" fill={band} />
              {/each}
            </g>
            {#each legendLabels as [label, y]}
              <text x="1409" {y}>{label}</text>
            {/each}
          </g>

          <g class="triad">
            <path d="M512.500 897V852" stroke="#00ff00" /><path d="M512.500 848l4 9h-8z" fill="#00ff00" />
            <path d="M512 896.500h45" stroke="#ff0000" /><path d="M562 896.500l-9-4v8z" fill="#ff0000" />
            <rect x="509" y="893" width="8" height="8" rx="1" fill="#0000ff" />
            <text x="516" y="851" fill="#00ff00">Y</text>
            <text x="516" y="891" fill="#0000ff">Z</text>
            <text x="556" y="891" fill="#ff0000">X</text>
          </g>
        </svg>
        <p class="caption">结果模型:流体分析</p>
      </div>
    </section>

    <aside class="plots">
      <div class="dock-title"><h2>曲线图</h2>{@render dockButtons()}</div>
      <div class="plot-area"></div>
      <div class="plot-tabs">
        <button class="active">曲线图</button>
        <button>报告浏览器</button>
      </div>
    </aside>
  </main>

  <footer class="status">
    <span>有效, 内部名称: StreamTrace</span>
    <span class="size">0.4 m x 0.28 m</span>
  </footer>

  <div class="taskbar">
    <div class="weather"><span>22°C</span><span class="sub">大部晴朗</span></div>
    <div class="apps">
      <button class="app" aria-label="开始">
        <svg width="30" height="30" viewBox="0 0 30 30"><path d="M0 0h14v14H0zM16 0h14v14H16zM0 16h14v14H0zM16 16h14v14H16z" fill="#4cc4fa" /></svg>
      </button>
      <label class="search">
        <svg width="20" height="20" viewBox="0 0 20 20"><circle cx="8" cy="8" r="6.5" fill="none" stroke="#e4e7f2" stroke-width="1.8" /><path d="M13 13l5 6" stroke="#e4e7f2" stroke-width="2" /></svg>
        <input type="text" placeholder="搜索" aria-label="搜索" />
      </label>
      {#each taskApps as app}
        <button class="app" class:running={app.running} class:current={app.current} aria-label={app.label}>{@render icon(app.icon, 30)}</button>
      {/each}
    </div>
    <div class="tray">
      <button aria-label="显示隐藏的图标"><svg width="20" height="20" viewBox="0 0 20 20"><path d="M4 13l6-6 6 6" fill="none" stroke="#fff" stroke-width="1.8" /></svg></button>
      <button aria-label="会议"><svg width="20" height="20" viewBox="0 0 20 20"><path d="M2.500 4v14M6.500 18V8l3.500 5 3.500-5v10M17.500 4v14" fill="none" stroke="#fff" stroke-width="2" /></svg></button>
      <button aria-label="OneDrive"><svg width="20" height="20" viewBox="0 0 20 20"><path d="M4 15a5 5 0 0 1 0-8c3-5 9-4 11 1 4 1 5 6 1 7z" fill="#b9bcc2" /><path d="M3 16c-2-3 1-6 4-5l4-2c4-1 8 2 8 4 0 2-2 3-3 3z" fill="#fff" /></svg></button>
      <button class="ime">中</button>
      <button aria-label="网络"><svg width="20" height="20" viewBox="0 0 20 20"><path d="M12 1H1v14h14v-4M5 19h9M8 15v4M14 1h5v6h-5zM16.500 7v12" fill="none" stroke="#fff" stroke-width="1.5" /></svg></button>
      <button class="tight" aria-label="音量"><svg width="20" height="20" viewBox="0 0 20 20"><path d="M1 7h4l5-4v14l-5-4H1zM12 7c2 2 2 4 0 6M14 5c3 3 3 7 0 10" fill="none" stroke="#fff" stroke-width="1.4" /><path d="M16 3c4 4 4 10 0 14" fill="none" stroke="#6a6f7a" stroke-width="1.4" /></svg></button>
      <button class="tight" aria-label="电池"><svg width="20" height="20" viewBox="0 0 20 20"><path d="M8 5h9v11H2v-4" fill="none" stroke="#fff" stroke-width="1.5" /><path d="M18 8h2v5h-2zM8 7h7v7H4v-3z" fill="#fff" /><path d="M4 0L0 7h3l-1 5 5-7H4z" fill="#fff" /></svg></button>
      <div class="clock"><span>21:20</span><span>2023/5/23</span></div>
      <button class="badge">3</button>
    </div>
  </div>
</div>

<style>
  :global(body) {
    margin: 0;
    background: #ebedef;
  }

  .defs {
    position: absolute;
  }

  .screen {
    display: flex;
    flex-direction: column;
    min-height: 100vh;
    font-family: 'Noto Sans', 'Noto Sans CJK SC', sans-serif;
    font-size: 15px;
    line-height: 20px;
    color: #1c1c1c;
    background: #ebedef;
  }

  button,
  input,
  select {
    font: inherit;
    color: inherit;
  }

  button {
    display: flex;
    align-items: center;
    justify-content: center;
    padding: 0;
    border: none;
    background: none;
    white-space: nowrap;
  }

  svg {
    display: block;
    flex: none;
    overflow: visible;
  }

  h1,
  h2,
  p {
    margin: 0;
    font-weight: 400;
  }

  .titlebar {
    display: flex;
    align-items: center;
    height: 37px;
  }

  .quick {
    display: flex;
    align-items: center;
    gap: 8px;
    padding-left: 2px;
  }

  .quick button {
    width: 19px;
  }

  .quick .caret {
    width: 10px;
  }

  .quick .refresh {
    width: 17px;
  }

  .quick-sep {
    width: 1px;
    height: 18px;
    background: #c6c8ca;
  }

  h1 {
    flex: 1;
    text-align: center;
    font-size: 16px;
  }

  .window-buttons {
    display: flex;
    padding-right: 1px;
  }

  .window-buttons button {
    width: 63px;
    height: 37px;
  }

  .ribbon-tabs {
    display: flex;
    height: 34px;
    background: #fff;
    box-shadow: inset 0 -1px #cfcfcf;
  }

  .file-tab {
    padding: 0 23px;
    margin-bottom: 1px;
    background: #2b579a;
    color: #fff;
  }

  .ribbon-tab {
    padding: 0 15px;
  }

  .ribbon-tab.active {
    padding: 0 14px;
    border: 1px solid #a5a5a5;
    border-bottom: none;
    background: #fafafa;
    color: #2b579a;
  }

  .collapse {
    width: 26px;
    margin-left: auto;
  }

  .ribbon {
    display: flex;
    height: 99px;
    padding-left: 5px;
    border-bottom: 1px solid #d0d0d0;
    background: #fafafa;
    box-shadow: 0 1px #fff;
    margin-bottom: 1px;
  }

  .ribbon-group {
    display: flex;
    margin: 2px 0 3px;
    padding: 0 4px;
    border-right: 1px solid #a8a8a8;
  }

  .ribbon-btn {
    flex-direction: column;
    justify-content: flex-start;
    padding: 11px 8px 0;
  }

  .ribbon-icon {
    margin: 0 -4px;
  }

  .ribbon-label {
    margin: 8px 0;
  }

  .workspace {
    display: flex;
    flex: 1;
  }

  .browser {
    display: flex;
    flex-direction: column;
    width: 423px;
  }

  .dock-title {
    display: flex;
    align-items: center;
    height: 30px;
    padding-left: 5px;
  }

  h2 {
    flex: 1;
    padding-bottom: 3px;
    font-size: 15px;
    color: #5d6f8c;
  }

  .dock-btn {
    width: 29px;
    height: 30px;
  }

  .browser .dock-title {
    padding-right: 8px;
  }

  .browser-tabs {
    display: flex;
    height: 21px;
    margin-top: 2px;
  }

  .browser-tabs button {
    padding: 0 7px;
    border: 1px solid transparent;
    border-bottom: none;
  }

  .browser-tabs .active {
    position: relative;
    z-index: 1;
    border-color: #a0a5aa;
    border-radius: 3px 3px 0 0;
    background: #fff;
  }

  .browser-body {
    display: flex;
    flex: 1;
    flex-direction: column;
    margin-right: 7px;
    background: #fff;
  }

  .tree-box {
    display: flex;
    border: 1px solid #a0a5aa;
    border-radius: 0 3px 3px 3px;
    margin-top: -2px;
  }

  .tree {
    flex: 1;
    margin: 0;
    padding-bottom: 3px;
    padding-left: 0;
    list-style: none;
  }

  .tree li {
    display: flex;
    align-items: center;
    height: 22px;
  }

  .tree li > :first-child {
    width: 24px;
  }

  .guide,
  .expander {
    position: relative;
    width: 25px;
    height: 22px;
  }

  .guide.line::before,
  .guide.last::before {
    content: '';
    position: absolute;
    left: 12px;
    top: 0;
    height: 100%;
    border-left: 1px solid #ccc;
  }

  .guide.last::before {
    width: 12px;
    height: 50%;
    box-sizing: border-box;
    border-bottom: 1px solid #ccc;
    border-radius: 0 0 0 3px;
  }

  .guide.branch::after {
    content: '';
    position: absolute;
    left: 13px;
    top: 11px;
    width: 12px;
    border-top: 1px solid #ccc;
  }

  .tree-icon {
    display: flex;
    justify-content: center;
    width: 28px;
    margin-right: 2px;
  }

  .bold {
    font-weight: 700;
  }

  .scrollbar {
    display: flex;
    flex-direction: column;
    align-items: center;
    width: 12px;
    padding: 20px 1px 5px 0;
  }

  .thumb {
    width: 6px;
    height: 140px;
    margin: auto 0 3px;
    background: #adb2b6;
  }

  .props {
    flex: 1;
    margin-top: 5px;
    border: 1px solid #a0a5aa;
    border-radius: 0 0 3px 3px;
    background: #ebedef;
  }

  table {
    width: 100%;
    border-collapse: collapse;
    background: #abb0b5;
  }

  th {
    height: 21px;
    padding: 0 12px 3px 11px;
    font-weight: 400;
    text-align: left;
    border-bottom: 1px solid #8c9094;
  }

  th:first-child {
    width: 101px;
    border-right: 1px solid #8c9094;
  }

  .props-tabs {
    display: flex;
    height: 22px;
  }

  .props-tabs button {
    padding: 0 7px;
  }

  .props-tabs .dark {
    margin: 2px 0 0 1px;
    padding: 2px 8px 0;
    border: 1px solid #7b7f83;
    border-bottom: none;
    background: #abb0b5;
  }

  .center {
    display: flex;
    flex: 1;
    flex-direction: column;
    min-width: 0;
  }

  .toolbar {
    display: flex;
    align-items: center;
    gap: 10px;
    height: 35px;
    padding: 0 0 1px 4px;
    box-sizing: border-box;
    background: #fff;
  }

  .tool {
    display: flex;
  }

  .drop {
    width: 10px;
  }

  .chev {
    width: 10px;
    height: 8px;
  }

  .sep {
    width: 1px;
    height: 30px;
    margin: 0 -4px;
    background: #c8cacc;
  }

  .sep.dots {
    width: 0;
    height: 26px;
    background: none;
    border-left: 2px dotted #9a9a9a;
  }

  .time-label {
    margin-left: 5px;
    white-space: nowrap;
  }

  .time-group {
    display: flex;
    align-items: center;
    gap: 8px;
    height: 34px;
    margin-left: 8px;
    padding-right: 8px;
    border-right: 1px solid #a0a0a0;
  }

  .field {
    display: flex;
    align-items: center;
    height: 24px;
    box-sizing: border-box;
    padding-right: 5px;
    border: 1px solid #a3a7ab;
    border-radius: 2px;
    background: #fff;
  }

  .field select,
  .field input {
    flex: 1;
    min-width: 0;
    padding: 0 0 1px 5px;
    border: none;
    outline: none;
    appearance: none;
    background: none;
  }

  .field input {
    padding-left: 3px;
    appearance: textfield;
  }

  .field input::-webkit-inner-spin-button {
    display: none;
  }

  .time {
    width: 80px;
  }

  .frame {
    width: 50px;
  }

  .speed {
    width: 80px;
  }

  .slider {
    width: 83px;
    height: 20px;
    margin: 0;
    appearance: none;
    background: none;
  }

  .slider::-webkit-slider-runnable-track {
    height: 4px;
    border: 1px solid #d4d4d4;
    border-top-color: #8f8f8f;
    box-sizing: border-box;
    margin-bottom: 8px;
  }

  .slider::-webkit-slider-thumb {
    appearance: none;
    width: 12px;
    height: 13px;
    margin-top: -1px;
    box-sizing: border-box;
    border: 1px solid #d0d0d0;
    border-right-color: #8f8f8f;
    border-bottom-color: #8f8f8f;
    background: #fafafa;
  }

  .player {
    display: flex;
    gap: 10px;
    margin-left: 2px;
  }

  .speed-group {
    display: flex;
    align-items: center;
    gap: 6px;
  }

  .viewport {
    position: relative;
    flex: 1;
    background: linear-gradient(#b9cde5, #d0dcea 48%, #e9ebee);
    overflow: hidden;
  }

  .scene {
    position: absolute;
    inset: 0;
    width: 100%;
    height: 100%;
  }

  .legend text {
    font-size: 12px;
    fill: #111;
  }

  .legend .unit {
    font-size: 16px;
    font-weight: 500;
    fill: #000;
  }

  .triad text {
    font-size: 12px;
    font-weight: 700;
  }

  .caption {
    position: absolute;
    left: 0;
    right: 0;
    bottom: 7px;
    text-align: center;
  }

  .plots {
    display: flex;
    flex-direction: column;
    width: 429px;
  }

  .plots .dock-title {
    padding: 0 1px 0 12px;
  }

  .plot-area {
    flex: 1;
    margin: 2px 0 0 7px;
    background: #a0a0a0;
  }

  .plot-tabs {
    display: flex;
    align-items: flex-start;
    gap: 2px;
    height: 28px;
    padding-left: 8px;
  }

  .plot-tabs button {
    height: 24px;
    margin-top: 2px;
    padding: 0 12px 2px 14px;
    box-sizing: border-box;
    border-right: 1px solid #a0a0a0;
    border-bottom: 1px solid #a0a0a0;
    background: #fff;
  }

  .plot-tabs .active {
    height: 27px;
    margin-top: 0;
    padding-bottom: 0;
  }

  .status {
    display: flex;
    align-items: center;
    justify-content: space-between;
    height: 31px;
    padding: 0 15px 0 5px;
    border: 1px solid #a0a0a0;
    color: #666;
  }

  .size {
    color: #222;
  }

  .taskbar {
    display: grid;
    grid-template-columns: 1fr auto 1fr;
    align-items: center;
    height: 60px;
    color: #fff;
    background: linear-gradient(90deg, #1c202a, #1a232e 17%, #10244f 19%, #101f5e 32%, #12235c 44%, #101e5e 50%, #1b1f3c 56%, #102050 63%, #14233f 70%, #1b202c 80%, #1b1f2b);
  }

  .weather {
    display: flex;
    flex-direction: column;
    padding: 0 0 2px 34px;
  }

  .sub {
    color: #d0d3d8;
  }

  .apps {
    display: flex;
    align-items: center;
  }

  .app {
    position: relative;
    width: 55px;
    height: 50px;
  }

  .app.current {
    width: 50px;
    margin: 0 3px 0 2px;
    border-radius: 4px;
    background: rgba(255, 255, 255, 0.08);
  }

  .app.running::after,
  .app.current::after {
    content: '';
    position: absolute;
    bottom: 1px;
    width: 8px;
    height: 4px;
    border-radius: 2px;
    background: #a0a2b0;
  }

  .app.current::after {
    width: 20px;
    background: #4cc2ff;
  }

  .search {
    display: flex;
    align-items: center;
    gap: 11px;
    width: 274px;
    height: 40px;
    margin: 0 3px 0 4px;
    padding: 0 14px;
    box-sizing: border-box;
    border: 1px solid #4a5688;
    border-radius: 20px;
    background: #34406f;
  }

  .search input {
    flex: 1;
    min-width: 0;
    padding: 0;
    border: none;
    outline: none;
    background: none;
    font-size: 18px;
  }

  .search input::placeholder {
    color: #d3d7e6;
    opacity: 1;
  }

  .tray {
    display: flex;
    align-items: center;
    justify-content: flex-end;
    gap: 20px;
    padding-right: 25px;
  }

  .ime {
    width: 20px;
    font-size: 18px;
  }

  .tight {
    margin-left: -10px;
  }

  .clock {
    display: flex;
    flex-direction: column;
    align-items: flex-end;
    padding-bottom: 2px;
  }

  .badge {
    width: 20px;
    height: 20px;
    margin-left: -6px;
    border-radius: 50%;
    background: #4cc2ff;
    color: #10202c;
    font-size: 12px;
  }
</style>
